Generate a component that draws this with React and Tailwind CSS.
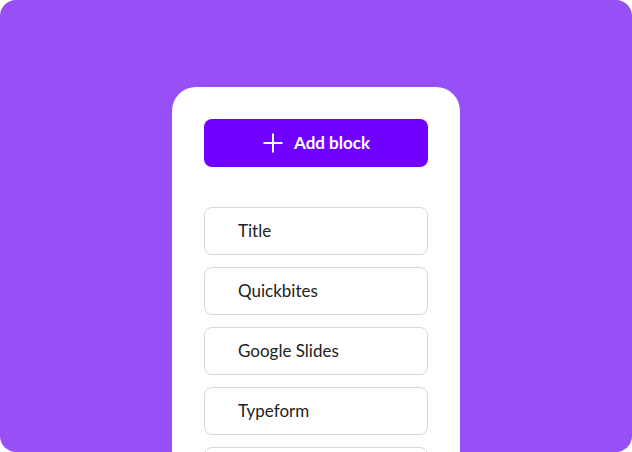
import { Plus } from 'lucide-react';

const blocks = ['Title', 'Quickbites', 'Google Slides', 'Typeform', ''];

export default function App() {
  return (
    <div
      className="w-[632px] h-[452px] bg-[#9650f5] rounded-2xl overflow-hidden flex justify-center pt-[87px]"
      style={{ fontFamily: 'Lato, "Noto Sans", sans-serif' }}
    >
      <div className="w-[288px] h-[420px] shrink-0 bg-white rounded-t-3xl px-8 pt-8">
        <button className="w-full h-12 rounded-lg bg-[#7000ff] text-white flex items-center justify-center gap-[6px] text-[17px] font-bold">
          <Plus size={30} strokeWidth={1.6} className="-ml-1" />
          Add block
        </button>

        <div className="mt-10 flex flex-col gap-3">
          {blocks.map((b, i) => (
            <div
              key={i}
              className="h-12 shrink-0 rounded-lg border border-[#d8d5e3] flex items-center pl-[33px] text-[17px] text-[#222]"
            >
              {b}
            </div>
          ))}
        </div>
      </div>
    </div>
  );
}
